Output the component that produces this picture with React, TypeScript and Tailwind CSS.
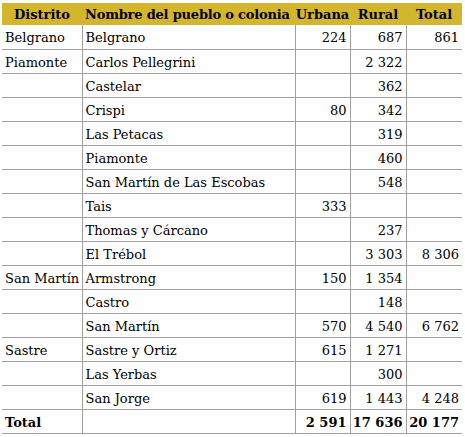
import React from "react";

type Row = { d: string; n: string; u: string; r: string; t: string };

const rows: Row[] = [
  { d: "Belgrano", n: "Belgrano", u: "224", r: "687", t: "861" },
  { d: "Piamonte", n: "Carlos Pellegrini", u: "", r: "2\u00a0322", t: "" },
  { d: "", n: "Castelar", u: "", r: "362", t: "" },
  { d: "", n: "Crispi", u: "80", r: "342", t: "" },
  { d: "", n: "Las Petacas", u: "", r: "319", t: "" },
  { d: "", n: "Piamonte", u: "", r: "460", t: "" },
  { d: "", n: "San Martín de Las Escobas", u: "", r: "548", t: "" },
  { d: "", n: "Tais", u: "333", r: "", t: "" },
  { d: "", n: "Thomas y Cárcano", u: "", r: "237", t: "" },
  { d: "", n: "El Trébol", u: "", r: "3\u00a0303", t: "8\u00a0306" },
  { d: "San Martín", n: "Armstrong", u: "150", r: "1\u00a0354", t: "" },
  { d: "", n: "Castro", u: "", r: "148", t: "" },
  { d: "", n: "San Martín", u: "570", r: "4\u00a0540", t: "6\u00a0762" },
  { d: "Sastre", n: "Sastre y Ortiz", u: "615", r: "1\u00a0271", t: "" },
  { d: "", n: "Las Yerbas", u: "", r: "300", t: "" },
  { d: "", n: "San Jorge", u: "619", r: "1\u00a0443", t: "4\u00a0248" },
];

export default function App() {
  return (
    <div className="w-[465px] h-[437px] bg-white pt-[3px] pl-[2px]" style={{ fontFamily: '"DejaVu Serif", serif' }}>
      <table className="w-[460px] table-fixed border-collapse text-[13px] text-black leading-none">
        <colgroup>
          <col className="w-[80px]" />
          <col className="w-[213px]" />
          <col className="w-[55px]" />
          <col className="w-[56px]" />
          <col className="w-[56px]" />
        </colgroup>
        <thead>
          <tr className="h-[22px] bg-[#d4b62e] font-bold">
            <th className="p-0 pt-[1px] text-center">Distrito</th>
            <th className="p-0 pt-[1px] pl-[3px] text-left whitespace-nowrap tracking-[-0.2px]">Nombre del pueblo o colonia</th>
            <th className="p-0 pt-[1px] text-center">Urbana</th>
            <th className="p-0 pt-[1px] text-center">Rural</th>
            <th className="p-0 pt-[1px] text-center">Total</th>
          </tr>
        </thead>
        <tbody>
          {rows.map((row, i) => (
            <tr key={i} className="h-[24px]">
              <td className="p-0 pt-[2px] pl-[3px] border-b border-[#a0a0a0] whitespace-nowrap">{row.d}</td>
              <td className="p-0 pt-[2px] pl-[3px] border-b border-l border-[#a0a0a0] whitespace-nowrap">{row.n}</td>
              <td className="p-0 pt-[2px] pr-[3px] text-right border-b border-l border-[#a0a0a0]">{row.u}</td>
              <td className="p-0 pt-[2px] pr-[3px] text-right border-b border-l border-[#a0a0a0]">{row.r}</td>
              <td className="p-0 pt-[2px] pr-[3px] text-right border-b border-l border-[#a0a0a0]">{row.t}</td>
            </tr>
          ))}
          <tr className="h-[24px] font-bold">
            <td className="p-0 pt-[2px] pl-[3px] border-b border-[#a0a0a0]">Total</td>
            <td className="p-0 pt-[2px] border-b border-l border-[#a0a0a0]"></td>
            <td className="p-0 pt-[2px] pr-[3px] text-right border-b border-l border-[#a0a0a0]">2{"\u00a0"}591</td>
            <td className="p-0 pt-[2px] pr-[3px] text-right border-b border-l border-[#a0a0a0]">17{"\u00a0"}636</td>
            <td className="p-0 pt-[2px] pr-[3px] text-right border-b border-l border-[#a0a0a0]">20{"\u00a0"}177</td>
          </tr>
        </tbody>
      </table>
    </div>
  );
}
